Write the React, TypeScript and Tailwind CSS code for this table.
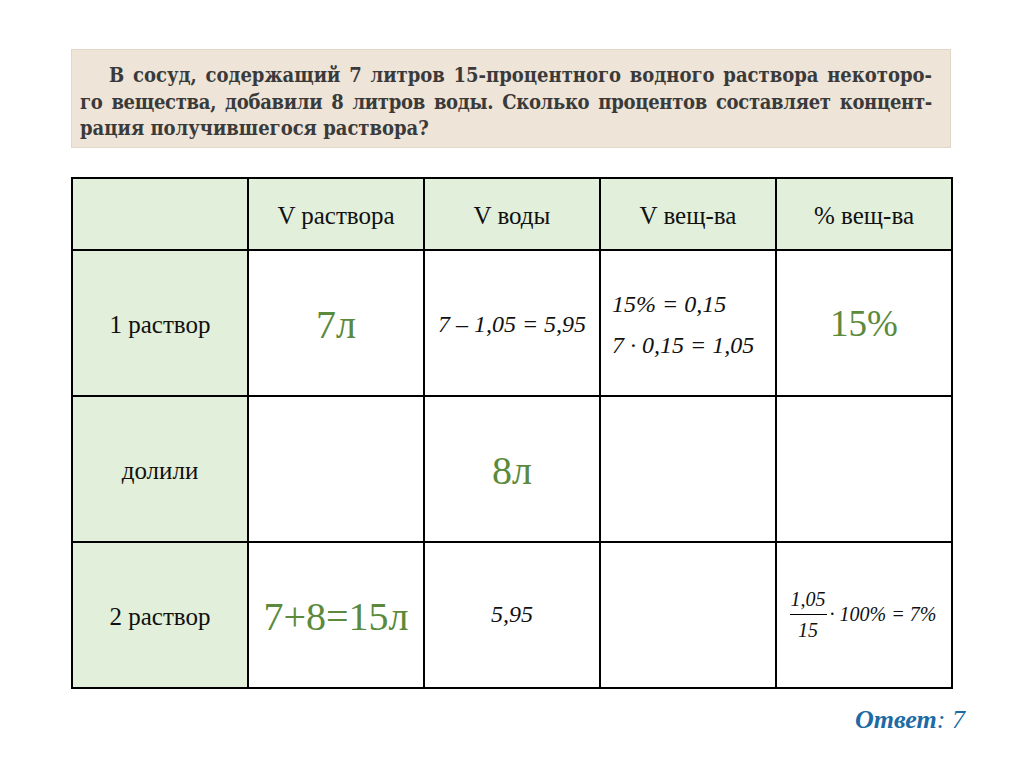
export default function App() {
  const cell = "border-r-2 border-b-2 border-black flex items-center justify-center";
  const green = "text-[#5b8a3c]";
  return (
    <div className="w-[1024px] h-[767px] bg-white relative font-['Liberation_Serif',serif] text-[#111]">
      <div className="pt-[49px] pl-[71px]">
        <div className="w-[880px] h-[99px] bg-[#eee4d7] border border-[#e2d8ca] pl-[8px] pt-[12px] text-[#3a3a3a] text-[20px] leading-[26.5px] font-bold font-['DejaVu_Serif_Condensed',serif]">
          <div className="w-[852px]">
            <div className="pl-[29px] whitespace-nowrap text-justify [text-align-last:justify]">В сосуд, содержащий 7 литров 15-процентного водного раствора некоторо-</div>
            <div className="whitespace-nowrap text-justify [text-align-last:justify] tracking-[-0.3px]">го вещества, добавили 8 литров воды. Сколько процентов составляет концент-</div>
            <div className="whitespace-nowrap">рация получившегося раствора?</div>
          </div>
        </div>

        <div className="mt-[29px] grid grid-cols-[repeat(5,176px)] grid-rows-[72px_146px_146px_146px] border-t-2 border-l-2 border-black w-[882px] text-[25px]">
          <div className={`${cell} bg-[#e2efda]`}></div>
          <div className={`${cell} bg-[#e2efda] pt-[4px]`}>V раствора</div>
          <div className={`${cell} bg-[#e2efda] pt-[4px]`}>V воды</div>
          <div className={`${cell} bg-[#e2efda] pt-[4px]`}>V вещ-ва</div>
          <div className={`${cell} bg-[#e2efda] pt-[4px]`}>% вещ-ва</div>

          <div className={`${cell} bg-[#e2efda] pt-[4px]`}>1 раствор</div>
          <div className={`${cell} ${green} text-[40px] pt-[4px]`}>7л</div>
          <div className={`${cell} italic text-[24px] pt-[2px]`}>7 – 1,05 = 5,95</div>
          <div className={`${cell} flex-col !items-start pl-[11px] italic text-[24px] leading-[41px] pt-[4px]`}>
            <span>15% = 0,15</span>
            <span>7 · 0,15 = 1,05</span>
          </div>
          <div className={`${cell} ${green} text-[37px] pt-[2px]`}>15%</div>

          <div className={`${cell} bg-[#e2efda] pt-[4px]`}>долили</div>
          <div className={cell}></div>
          <div className={`${cell} ${green} text-[40px] pt-[4px]`}>8л</div>
          <div className={cell}></div>
          <div className={cell}></div>

          <div className={`${cell} bg-[#e2efda] pt-[4px]`}>2 раствор</div>
          <div className={`${cell} ${green} text-[40px] pt-[4px]`}>7+8=15л</div>
          <div className={`${cell} italic text-[24px] pb-[2px]`}>5,95</div>
          <div className={cell}></div>
          <div className={`${cell} italic text-[20px] pb-[2px] pr-[2px]`}>
            <div className="flex items-center gap-[3px]">
              <div className="flex flex-col items-center leading-[30px]">
                <span className="px-[1px]">1,05</span>
                <span className="w-full border-t border-black"></span>
                <span>15</span>
              </div>
              <span>· 100% = 7%</span>
            </div>
          </div>
        </div>
      </div>

      <div className="absolute left-[855px] top-[700px] text-[26px] font-bold italic text-[#1d6aa5]">
        Ответ<span className="font-normal">: 7</span>
      </div>
    </div>
  );
}
